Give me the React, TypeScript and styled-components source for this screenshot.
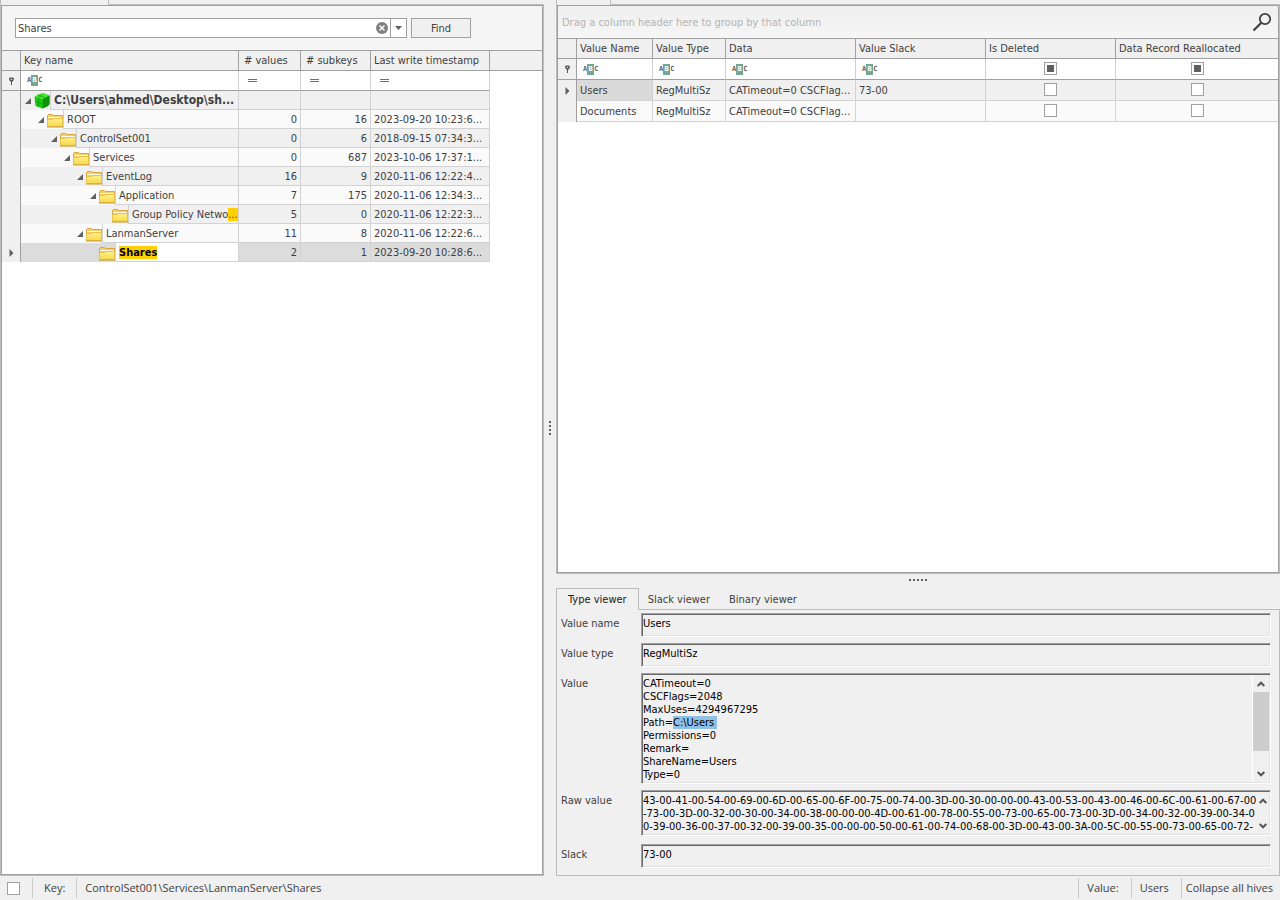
import React, { useEffect, useRef } from "react";
import styled, { createGlobalStyle, css } from "styled-components";

const ui = '"DejaVu Sans Condensed", "DejaVu Sans", Tahoma, sans-serif';
const statusFont = '"Open Sans", "Segoe UI", sans-serif';
const edge = "#a0a0a0";
const edgeSoft = "#bcbcbc";
const gridLine = "#d2d2d2";
const face = "#f0f0f0";
const ink = "#404040";
const tones = { even: "#f0f0f0", odd: "#fafafa", selected: "#dcdcdc" };
type Tone = keyof typeof tones;

const GlobalStyle = createGlobalStyle`
  *, *::before, *::after { box-sizing: border-box; }
  body { margin: 0; background: ${face}; color: ${ink}; font: 11px/13px ${ui}; }
  button, input, textarea { font: inherit; color: inherit; margin: 0; }
  table { border-collapse: separate; border-spacing: 0; table-layout: fixed; width: 100%; }
  th, td { padding: 0; font-weight: normal; text-align: left; white-space: nowrap; overflow: hidden; }
`;

const Page = styled.div`
  min-height: 100vh;
  display: flex;
  flex-direction: column;
`;

const Workspace = styled.main`
  flex: 1;
  display: grid;
  grid-template-columns: minmax(0, 544fr) 12px minmax(0, 724fr);
`;

const Column = styled.section`
  display: flex;
  flex-direction: column;
  min-width: 0;
`;

const TopTab = styled.div<{ $width: number }>`
  display: flex;
  height: 5px;
  border-left: 1px solid ${edgeSoft};
  &::before { content: ""; width: ${(p) => p.$width}px; }
  &::after { content: ""; flex: 1; border-left: 1px solid ${edgeSoft}; border-bottom: 1px solid ${edgeSoft}; }
`;

const Pane = styled.div`
  flex: 1;
  display: flex;
  border: 1px solid ${edgeSoft};
  border-top: 0;
`;

const PaneBody = styled.div`
  flex: 1;
  min-width: 0;
  background: #fff;
  border: 1px solid ${edge};
`;

const Splitter = styled.div<{ $vertical?: boolean }>`
  display: flex;
  align-items: center;
  justify-content: center;
  ${(p) => (p.$vertical ? css`padding-bottom: 20px;` : css`height: 14px; padding-bottom: 2px;`)}
`;

/* find panel */
const FindBar = styled.form`
  display: flex;
  align-items: center;
  gap: 4px;
  height: 45px;
  padding: 0 13px;
  background: #f5f5f5;
  border-bottom: 1px solid ${edge};
`;

const Combo = styled.div`
  flex: 0 1 392px;
  display: flex;
  align-items: center;
  height: 20px;
  background: #fff;
  border: 1px solid ${edge};
`;

const ComboInput = styled.input`
  flex: 1;
  min-width: 0;
  padding: 0 2px;
  border: 0;
  outline: 0;
  background: none;
`;

const IconButton = styled.button`
  display: flex;
  align-items: center;
  justify-content: center;
  padding: 0;
  border: 0;
  background: none;
`;

const DropButton = styled(IconButton)`
  width: 16px;
  height: 18px;
  margin-left: 2px;
  border-left: 1px solid ${edge};
`;

const FindButton = styled.button`
  width: 60px;
  height: 20px;
  padding: 0;
  border: 1px solid ${edge};
  background: ${face};
`;

/* grids */
const HeadCell = styled.th<{ $pad?: number }>`
  height: 20px;
  padding-left: ${(p) => p.$pad ?? 3}px;
  background: ${face};
  border-right: 1px solid ${edge};
  border-bottom: 1px solid ${edge};
  &:last-child { border-right: 0; }
`;

const FilterCell = styled.td<{ $h: number; $pad?: number }>`
  height: ${(p) => p.$h}px;
  padding-left: ${(p) => p.$pad ?? 0}px;
  background: #fff;
  border-right: 1px solid ${gridLine};
  border-bottom: 1px solid ${edge};
  svg { display: block; }
  &:last-child { border-right: 0; }
`;

const MarkCell = styled.td<{ $filter?: boolean }>`
  background: ${face};
  border-right: 1px solid ${edge};
  ${(p) => p.$filter && css`border-bottom: 1px solid ${edge};`}
  svg { display: block; margin: 0 auto; }
`;

const Cell = styled.td<{ $h: number; $tone: Tone; $num?: boolean; $center?: boolean; $focus?: boolean }>`
  height: ${(p) => p.$h}px;
  padding: ${(p) => (p.$center ? "0" : "0 3px")};
  text-align: ${(p) => (p.$num ? "right" : "left")};
  background: ${(p) => (p.$focus ? "#dadada" : tones[p.$tone])};
  border-right: 1px solid ${gridLine};
  border-bottom: 1px solid ${gridLine};
`;

const EndCell = styled(Cell)`
  border-right: 0;
`;

const TreeCell = styled.td<{ $tone: Tone }>`
  background: ${(p) => tones[p.$tone]};
  border-right: 1px solid ${gridLine};
`;

const TreeLine = styled.div<{ $level: number }>`
  display: flex;
  align-items: center;
  height: 19px;
  padding-left: ${(p) => 3 + p.$level * 13}px;
`;

const Expander = styled(IconButton)`
  flex: none;
  width: 10px;
  height: 18px;
  padding-left: 1px;
  justify-content: flex-start;
`;

const ExpanderGap = styled.span`
  flex: none;
  width: 10px;
`;

const NodeIcon = styled.svg`
  flex: none;
  align-self: flex-end;
  width: 16px;
  height: 16px;
  margin-bottom: 1px;
`;

const NodeText = styled.span<{ $root?: boolean; $focus?: boolean }>`
  flex: 1;
  min-width: 0;
  height: 19px;
  padding: 3px 0 0 3px;
  overflow: hidden;
  border-left: 1px solid ${gridLine};
  border-bottom: 1px solid ${gridLine};
  ${(p) => p.$root && css`font-size: 12px; font-weight: bold;`}
  ${(p) => p.$focus && css`background: #fff; color: #000; font-weight: bold;`}
`;

const Hit = styled.mark`
  color: inherit;
  background: #ffd000;
`;

const AbcBox = styled.span`
  display: flex;
  align-items: center;
  font: bold 7px/11px "DejaVu Sans Mono", monospace;
  color: #606060;
`;

const AbcMid = styled.span`
  width: 7px;
  height: 11px;
  text-align: center;
  color: #fff;
  background: #75a594;
`;

const GroupPanel = styled.div`
  display: flex;
  align-items: center;
  justify-content: space-between;
  height: 33px;
  padding: 0 6px 0 4px;
  color: #b4b4b4;
  background: linear-gradient(#efefef, #f6f6f6);
  border-bottom: 1px solid ${edge};
`;

const Check = styled.input`
  appearance: none;
  display: block;
  width: 13px;
  height: 13px;
  && { margin: 0 auto 1px; }
  background: #fff;
  border: 1px solid ${edge};
  &:indeterminate { background: #606060; box-shadow: inset 0 0 0 2px #fff; }
`;

/* viewer */
const TabStrip = styled.div`
  display: flex;
  height: 22px;
`;

const Tab = styled.button<{ $active?: boolean }>`
  padding: ${(p) => (p.$active ? "0 11px" : "1px 10px 0 9px")};
  background: none;
  border: 0 solid ${edgeSoft};
  ${(p) => (p.$active ? css`border-width: 1px 1px 0 1px; color: #202020;` : css`border-bottom-width: 1px;`)}
`;

const TabFill = styled.div`
  flex: 1;
  border-bottom: 1px solid ${edgeSoft};
`;

const Viewer = styled.div`
  display: grid;
  grid-template-columns: 80px minmax(0, 1fr);
  grid-template-rows: 24px 24px 111px 48px 24px;
  align-items: start;
  row-gap: 6px;
  padding: 3px 8px 7px 4px;
  border: 1px solid ${edgeSoft};
  border-top: 0;
`;

const FieldLabel = styled.label`
  padding-top: 4px;
`;

const Sunken = styled.div<{ $h: number }>`
  display: flex;
  height: ${(p) => p.$h}px;
  color: #000;
  border: 1px solid;
  border-color: ${edge} #fff #fff ${edge};
  box-shadow: inset 0 1px #696969, inset -1px -1px #e3e3e3;
  &::before { content: ""; width: 1px; background: #696969; }
`;

const FieldInput = styled.input`
  flex: 1;
  min-width: 0;
  height: 18px;
  padding: 0;
  border: 0;
  outline: 0;
  background: none;
`;

const FieldArea = styled.textarea`
  flex: 1;
  min-width: 0;
  padding: 3px 0 0;
  border: 0;
  outline: 0;
  resize: none;
  white-space: pre;
  overflow: hidden;
  background: none;
  &::selection { color: #000; background: rgba(142, 192, 231, 0.99); }
`;

const ScrollTrack = styled.div<{ $lined?: boolean }>`
  display: flex;
  flex-direction: column;
  width: ${(p) => (p.$lined ? 17 : 13)}px;
  margin: 1px 1px 1px 0;
  ${(p) => p.$lined && css`border-left: 1px solid #fff;`}
`;

const ScrollButton = styled(IconButton)`
  height: 17px;
`;

const ScrollRoom = styled.div`
  flex: 1;
`;

const ScrollThumb = styled.div`
  height: 59px;
  background: #cdcdcd;
`;

/* status bar */
const StatusBar = styled.footer`
  display: flex;
  align-items: center;
  height: 24px;
  padding: 0 7px;
  font: 11px/20px ${statusFont};
`;

const StatusItem = styled.span<{ $left: number; $right: number }>`
  height: 20px;
  padding: 0 ${(p) => p.$right}px 0 ${(p) => p.$left}px;
  border-left: 1px solid #c8c8c8;
`;

const StatusCheck = styled(Check)`
  && { margin: 0 12px 0 0; }
`;

const StatusAction = styled.button`
  height: 20px;
  padding: 0 0 0 4px;
  border: 0;
  border-left: 1px solid #c8c8c8;
  background: none;
`;

const Spacer = styled.div`
  flex: 1;
`;

const Folder = () => (
  <NodeIcon viewBox="0 0 16 16" aria-hidden="true">
    <defs>
      <linearGradient id="folderFace" x1="0" y1="0" x2="0" y2="1">
        <stop offset="0" stopColor="#fff08c" />
        <stop offset="1" stopColor="#f6da48" />
      </linearGradient>
    </defs>
    <path d="M0.500 14.500V3.500L1.500 2.500H5.500L6.500 3.500H15.500V14.500Z" fill="#f6cf68" stroke="#dca53c" />
    <path d="M1 5.500H15" stroke="#fffbe6" />
    <path d="M0.500 14.500V7.500H5.500L7 6.500H15.500V14.500Z" fill="url(#folderFace)" stroke="#e8c04c" />
    <path d="M0 15H16" stroke="#d09a34" />
  </NodeIcon>
);

const Cube = () => (
  <NodeIcon viewBox="0 0 16 16" aria-hidden="true">
    <path d="M.5 4L5 1L10 .5L15.500 2.500L15.500 11L14 13L8.500 15.500L1.500 13Z" fill="#17c80d" />
    <path d="M.5 4L5 1L10 .5L15.500 2.500L9 6Z" fill="#4fe632" />
    <path d="M9 6L15.500 2.500V11L14 13L8.500 15.500Z" fill="#0e8f0a" />
    <path d="M4.500 5V14M1 8.500L9 10.500M12.500 4.500V13M9 10.500L15 7M4 2.500L11 4.500M9 1L4 4.500" stroke="#0b9a0b" fill="none" strokeWidth=".7" />
  </NodeIcon>
);

const Pin = () => (
  <svg width="7" height="8" viewBox="0 0 7 8" aria-hidden="true">
    <path d="M1 1.500C1 .3 6 .3 6 1.500L5.500 3.500L4 5V8H3V5L1.500 3.500Z" fill="#555" />
    <path d="M2.500 1.800H4.500L4 3H3Z" fill="#ddd" />
  </svg>
);

const RowPointer = () => (
  <svg width="5" height="8" viewBox="0 0 5 8" aria-hidden="true">
    <path d="M0.500 0L4.500 4L0.500 8Z" fill="#606060" />
  </svg>
);

const Equals = () => (
  <svg width="9" height="3" viewBox="0 0 9 3" aria-label="Equals">
    <path d="M0 .5H9M0 2.500H9" stroke="#707070" />
  </svg>
);

const Abc = () => (
  <AbcBox>
    A<AbcMid>B</AbcMid>C
  </AbcBox>
);

const Chevron = ({ down }: { down?: boolean }) => (
  <svg width="8" height="6" viewBox="0 0 8 6" aria-hidden="true">
    <path d={down ? "M.7 1L4 4.300L7.300 1" : "M.7 5L4 1.700L7.300 5"} fill="none" stroke="#555" strokeWidth="2" />
  </svg>
);

const Dots = ({ vertical }: { vertical?: boolean }) =>
  vertical ? (
    <svg width="2" height="14" aria-hidden="true">
      {[0, 4, 8, 12].map((p) => <rect key={p} y={p} width="2" height="2" fill="#606060" />)}
    </svg>
  ) : (
    <svg width="18" height="2" aria-hidden="true">
      {[0, 4, 8, 12, 16].map((p) => <rect key={p} x={p} width="2" height="2" fill="#606060" />)}
    </svg>
  );

const TriState = ({ label }: { label: string }) => {
  const ref = useRef<HTMLInputElement>(null);
  useEffect(() => {
    if (ref.current) ref.current.indeterminate = true;
  }, []);
  return <Check ref={ref} type="checkbox" aria-label={label} />;
};

type Key = { level: number; name: string; hit?: string; values?: number; subkeys?: number; time?: string; open?: boolean };

const keys: Key[] = [
  { level: 0, name: "C:\\Users\\ahmed\\Desktop\\sh...", open: true },
  { level: 1, name: "ROOT", values: 0, subkeys: 16, time: "2023-09-20 10:23:6...", open: true },
  { level: 2, name: "ControlSet001", values: 0, subkeys: 6, time: "2018-09-15 07:34:3...", open: true },
  { level: 3, name: "Services", values: 0, subkeys: 687, time: "2023-10-06 17:37:1...", open: true },
  { level: 4, name: "EventLog", values: 16, subkeys: 9, time: "2020-11-06 12:22:4...", open: true },
  { level: 5, name: "Application", values: 7, subkeys: 175, time: "2020-11-06 12:34:3...", open: true },
  { level: 6, name: "Group Policy Netwo", hit: "...", values: 5, subkeys: 0, time: "2020-11-06 12:22:3..." },
  { level: 4, name: "LanmanServer", values: 11, subkeys: 8, time: "2020-11-06 12:22:6...", open: true },
  { level: 5, name: "", hit: "Shares", values: 2, subkeys: 1, time: "2023-09-20 10:28:6..." },
];

const KeyTree = () => (
  <table>
    <colgroup>
      <col style={{ width: 19 }} />
      <col style={{ width: 218 }} />
      <col style={{ width: 62 }} />
      <col style={{ width: 70 }} />
      <col style={{ width: 119 }} />
      <col />
    </colgroup>
    <thead>
      <tr>
        <HeadCell />
        <HeadCell>Key name</HeadCell>
        <HeadCell $pad={5}># values</HeadCell>
        <HeadCell $pad={5}># subkeys</HeadCell>
        <HeadCell>Last write timestamp</HeadCell>
        <HeadCell />
      </tr>
    </thead>
    <tbody>
      <tr>
        <MarkCell $filter><Pin /></MarkCell>
        <FilterCell $h={20} $pad={6}><Abc /></FilterCell>
        <FilterCell $h={20} $pad={9}><Equals /></FilterCell>
        <FilterCell $h={20} $pad={9}><Equals /></FilterCell>
        <FilterCell $h={20} $pad={9}><Equals /></FilterCell>
        <td />
      </tr>
      {keys.map((k, i) => {
        const selected = k.hit === "Shares";
        const tone: Tone = selected ? "selected" : i % 2 ? "odd" : "even";
        return (
          <tr key={i}>
            <MarkCell>{selected && <RowPointer />}</MarkCell>
            <TreeCell $tone={tone}>
              <TreeLine $level={k.level}>
                {k.open ? (
                  <Expander type="button" aria-label="Collapse">
                    <svg width="6" height="6" viewBox="0 0 6 6"><path d="M6 0V6H0Z" fill="#606060" /></svg>
                  </Expander>
                ) : (
                  <ExpanderGap />
                )}
                {i === 0 ? <Cube /> : <Folder />}
                <NodeText $root={i === 0} $focus={selected}>
                  {k.name}
                  {k.hit && <Hit>{k.hit}</Hit>}
                </NodeText>
              </TreeLine>
            </TreeCell>
            <Cell $h={19} $num $tone={tone}>{k.values}</Cell>
            <Cell $h={19} $num $tone={tone}>{k.subkeys}</Cell>
            <Cell $h={19} $tone={tone}>{k.time}</Cell>
            <td />
          </tr>
        );
      })}
    </tbody>
  </table>
);

const valueHeads = ["Value Name", "Value Type", "Data", "Value Slack", "Is Deleted", "Data Record Reallocated"];
const valueRows: { name: string; slack: string; tone: Tone; current?: boolean }[] = [
  { name: "Users", slack: "73-00", tone: "even", current: true },
  { name: "Documents", slack: "", tone: "odd" },
];

const ValueGrid = () => (
  <table>
    <colgroup>
      <col style={{ width: 19 }} />
      <col style={{ width: 76 }} />
      <col style={{ width: 73 }} />
      <col style={{ width: 130 }} />
      <col style={{ width: 130 }} />
      <col style={{ width: 130 }} />
      <col />
    </colgroup>
    <thead>
      <tr>
        <HeadCell />
        {valueHeads.map((h) => <HeadCell key={h}>{h}</HeadCell>)}
      </tr>
    </thead>
    <tbody>
      <tr>
        <MarkCell $filter><Pin /></MarkCell>
        {[0, 1, 2, 3].map((c) => (
          <FilterCell key={c} $h={21} $pad={6}><Abc /></FilterCell>
        ))}
        <FilterCell $h={21}><TriState label="Filter Is Deleted" /></FilterCell>
        <FilterCell $h={21}><TriState label="Filter Data Record Reallocated" /></FilterCell>
      </tr>
      {valueRows.map((v) => (
        <tr key={v.name}>
          <MarkCell>{v.current && <RowPointer />}</MarkCell>
          <Cell $h={21} $tone={v.tone} $focus={v.current}>{v.name}</Cell>
          <Cell $h={21} $tone={v.tone}>RegMultiSz</Cell>
          <Cell $h={21} $tone={v.tone}>CATimeout=0 CSCFlag...</Cell>
          <Cell $h={21} $tone={v.tone}>{v.slack}</Cell>
          <Cell $h={21} $tone={v.tone} $center><Check type="checkbox" aria-label={`${v.name} is deleted`} /></Cell>
          <EndCell $h={21} $tone={v.tone} $center><Check type="checkbox" aria-label={`${v.name} reallocated`} /></EndCell>
        </tr>
      ))}
    </tbody>
  </table>
);

const valueText = "CATimeout=0\nCSCFlags=2048\nMaxUses=4294967295\nPath=C:\\Users\nPermissions=0\nRemark=\nShareName=Users\nType=0";
const rawText = [
  "43-00-41-00-54-00-69-00-6D-00-65-00-6F-00-75-00-74-00-3D-00-30-00-00-00-43-00-53-00-43-00-46-00-6C-00-61-00-67-00",
  "-73-00-3D-00-32-00-30-00-34-00-38-00-00-00-4D-00-61-00-78-00-55-00-73-00-65-00-73-00-3D-00-34-00-32-00-39-00-34-0",
  "0-39-00-36-00-37-00-32-00-39-00-35-00-00-00-50-00-61-00-74-00-68-00-3D-00-43-00-3A-00-5C-00-55-00-73-00-65-00-72-",
].join("\n");

const Scroll = ({ thumb }: { thumb?: boolean }) => (
  <ScrollTrack $lined={thumb}>
    <ScrollButton type="button" aria-label="Scroll up"><Chevron /></ScrollButton>
    {thumb && <ScrollThumb />}
    <ScrollRoom />
    <ScrollButton type="button" aria-label="Scroll down"><Chevron down /></ScrollButton>
  </ScrollTrack>
);

const TypeViewer = () => {
  const value = useRef<HTMLTextAreaElement>(null);
  useEffect(() => {
    const start = valueText.indexOf("C:\\Users");
    value.current?.focus({ preventScroll: true });
    value.current?.setSelectionRange(start, start + 9);
  }, []);
  return (
    <Viewer>
      <FieldLabel htmlFor="vname">Value name</FieldLabel>
      <Sunken $h={24}><FieldInput id="vname" readOnly value="Users" /></Sunken>
      <FieldLabel htmlFor="vtype">Value type</FieldLabel>
      <Sunken $h={24}><FieldInput id="vtype" readOnly value="RegMultiSz" /></Sunken>
      <FieldLabel htmlFor="value">Value</FieldLabel>
      <Sunken $h={111}>
        <FieldArea id="value" ref={value} readOnly value={valueText} />
        <Scroll thumb />
      </Sunken>
      <FieldLabel htmlFor="raw">Raw value</FieldLabel>
      <Sunken $h={46}>
        <FieldArea id="raw" readOnly value={rawText} />
        <Scroll />
      </Sunken>
      <FieldLabel htmlFor="slack">Slack</FieldLabel>
      <Sunken $h={24}><FieldInput id="slack" readOnly value="73-00" /></Sunken>
    </Viewer>
  );
};

export default function App() {
  return (
    <Page>
      <GlobalStyle />
      <Workspace>
        <Column>
          <TopTab $width={107} />
          <Pane>
            <PaneBody>
              <FindBar onSubmit={(e) => e.preventDefault()}>
                <Combo>
                  <ComboInput aria-label="Find text" defaultValue="Shares" />
                  <IconButton type="button" aria-label="Clear">
                    <svg width="12" height="12" viewBox="0 0 12 12">
                      <circle cx="6" cy="6" r="6" fill="#808080" />
                      <path d="M3.500 3.500L8.500 8.500M8.500 3.500L3.500 8.500" stroke="#fff" strokeWidth="1.400" />
                    </svg>
                  </IconButton>
                  <DropButton type="button" aria-label="History">
                    <svg width="7" height="4" viewBox="0 0 7 4"><path d="M0 0H7L3.500 4Z" fill="#606060" /></svg>
                  </DropButton>
                </Combo>
                <FindButton type="submit">Find</FindButton>
              </FindBar>
              <KeyTree />
            </PaneBody>
          </Pane>
        </Column>
        <Splitter $vertical><Dots vertical /></Splitter>
        <Column>
          <TopTab $width={53} />
          <Pane>
            <PaneBody>
              <GroupPanel>
                Drag a column header here to group by that column
                <IconButton type="button" aria-label="Search">
                  <svg width="20" height="20" viewBox="0 0 20 20">
                    <circle cx="13" cy="7" r="5.200" fill="none" stroke="#404040" strokeWidth="1.800" />
                    <path d="M9.300 10.700L1.500 18.500" stroke="#404040" strokeWidth="2.200" />
                  </svg>
                </IconButton>
              </GroupPanel>
              <ValueGrid />
            </PaneBody>
          </Pane>
          <Splitter><Dots /></Splitter>
          <TabStrip>
            <Tab type="button" $active>Type viewer</Tab>
            <Tab type="button">Slack viewer</Tab>
            <Tab type="button">Binary viewer</Tab>
            <TabFill />
          </TabStrip>
          <TypeViewer />
        </Column>
      </Workspace>
      <StatusBar>
        <StatusCheck type="checkbox" aria-label="Toggle" />
        <StatusItem $left={11} $right={11}>Key:</StatusItem>
        <StatusItem $left={8} $right={0}>ControlSet001\Services\LanmanServer\Shares</StatusItem>
        <Spacer />
        <StatusItem $left={8} $right={12}>Value:</StatusItem>
        <StatusItem $left={8} $right={12}>Users</StatusItem>
        <StatusAction type="button">Collapse all hives</StatusAction>
      </StatusBar>
    </Page>
  );
}
